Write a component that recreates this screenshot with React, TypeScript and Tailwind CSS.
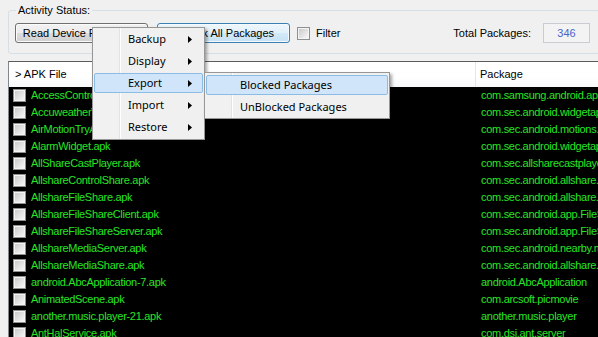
import React from "react";

const rows: [string, string][] = [
  ["AccessControl.apk", "com.samsung.android.app.accesscontrol"],
  ["AccuweatherWidget.apk", "com.sec.android.widgetapp.ap.hero.accuweather"],
  ["AirMotionTryActually.apk", "com.sec.android.motions.settings.panningtutorial"],
  ["AlarmWidget.apk", "com.sec.android.widgetapp.alarmwidget"],
  ["AllShareCastPlayer.apk", "com.sec.allsharecastplayer"],
  ["AllshareControlShare.apk", "com.sec.android.allshare.controlshare"],
  ["AllshareFileShare.apk", "com.sec.android.allshare.framework"],
  ["AllshareFileShareClient.apk", "com.sec.android.app.FileShareClient"],
  ["AllshareFileShareServer.apk", "com.sec.android.app.FileShareServer"],
  ["AllshareMediaServer.apk", "com.sec.android.nearby.mediaserver"],
  ["AllshareMediaShare.apk", "com.sec.android.allshare.service.mediashare"],
  ["android.AbcApplication-7.apk", "android.AbcApplication"],
  ["AnimatedScene.apk", "com.arcsoft.picmovie"],
  ["another.music.player-21.apk", "another.music.player"],
  ["AntHalService.apk", "com.dsi.ant.server"],
];

function CheckBox() {
  return (
    <div className="w-[13px] h-[13px] shrink-0 border border-[#8e8f8f] bg-[#f4f4f4] p-[1px]">
      <div className="w-full h-full bg-linear-to-br from-[#cbcbcb] to-[#f6f6f6]" />
    </div>
  );
}

function Arrow() {
  return (
    <svg width="4" height="7" viewBox="0 0 4 7">
      <polygon points="0,0 4,3.5 0,7" fill="#000" />
    </svg>
  );
}

function MenuItem({ label, active, arrow }: { label: string; active?: boolean; arrow?: boolean }) {
  return (
    <div className="h-[22px] px-[1px] py-[1px] relative">
      <div
        className={
          "h-full flex items-center justify-between pl-[33px] pr-[10px] rounded-[2px] border " +
          (active ? "border-[#8cbbe6] bg-[#d0e5fa]" : "border-transparent")
        }
      >
        <span>{label}</span>
        {arrow ? <Arrow /> : null}
      </div>
    </div>
  );
}

export default function App() {
  return (
    <div className="w-[598px] h-[337px] overflow-hidden bg-[#f0f0f0] relative font-['Liberation_Sans',Arial,sans-serif] text-[11px] text-black leading-[13px]">
      <div className="w-[640px] pl-[8px] pt-[10px]">
        {/* Group box */}
        <div className="relative w-[592px] h-[44px] border border-[#d5dfe5] rounded-[3px] flex items-start pt-[12px] pl-[6px] pr-[9px]">
          <span className="absolute left-[7px] top-[-7px] px-[2px] bg-[#f0f0f0]">Activity Status:</span>
          <div className="w-[133px] h-[20px] rounded-[3px] border border-[#707070] shadow-[inset_0_0_0_1px_#fbfbfb] bg-[linear-gradient(to_bottom,#f2f2f2_0%,#ebebeb_50%,#dddddd_50%,#cfcfcf_100%)] flex items-center justify-center pr-[3px]">
            Read Device Packages
          </div>
          <div className="ml-[9px] w-[133px] h-[20px] rounded-[3px] border border-[#3c7fb1] shadow-[inset_0_0_0_1px_#f4fafe] bg-[linear-gradient(to_bottom,#eef6fc_0%,#e2f0fa_50%,#d3e9f8_50%,#c6e1f4_100%)] flex items-center justify-center pl-[4px]">
            Check All Packages
          </div>
          <div className="ml-[7px] h-[20px] flex items-center">
            <CheckBox />
            <span className="ml-[6px]">Filter</span>
          </div>
          <div className="ml-auto h-[20px] flex items-center">
            <span>Total Packages:</span>
            <div className="ml-[12px] w-[47px] h-[20px] border border-[#c9ccd1] bg-[#f3f3f3] flex items-center justify-center text-[#4a63c9]">
              346
            </div>
          </div>
        </div>

        {/* List view */}
        <div className="mt-[7px] border-l border-t border-l-[#828790] border-t-[#5c5c5c] w-[592px]">
          <div className="h-[25px] bg-[linear-gradient(to_bottom,#ffffff_0%,#ffffff_60%,#f7f8fa_100%)] flex">
            <div className="w-[467px] shrink-0 border-r border-[#e3e5e8] flex items-center pl-[6px]">&gt; APK File</div>
            <div className="flex-1 flex items-center pl-[4px]">Package</div>
          </div>
          <div className="bg-black h-[260px]">
            {rows.map(([apk, pkg]) => (
              <div key={apk} className="h-[17px] flex text-[#26e626] whitespace-nowrap tracking-[-0.3px]">
                <div className="w-[467px] shrink-0 flex items-center pl-[4px] overflow-hidden">
                  <CheckBox />
                  <span className="ml-[5px]">{apk}</span>
                </div>
                <div className="flex-1 flex items-center pl-[5px] overflow-hidden">{pkg}</div>
              </div>
            ))}
          </div>
        </div>
      </div>

      {/* Context menu */}
      <div className="absolute left-[92px] top-[27px] w-[113px] border border-[#979797] bg-[#f0f0f0] pb-[1px] shadow-[2px_2px_3px_rgba(0,0,0,0.35)] font-['Noto_Sans',sans-serif] text-[11px] leading-[14px]">
        <div className="absolute left-0 top-0 bottom-0 w-[27px] bg-[#f1f1f1] border-r border-[#e2e3e3] shadow-[1px_0_0_#ffffff]" />
        <MenuItem label="Backup" arrow />
        <MenuItem label="Display" arrow />
        <MenuItem label="Export" arrow active />
        <MenuItem label="Import" arrow />
        <MenuItem label="Restore" arrow />
      </div>

      {/* Submenu */}
      <div className="absolute left-[204px] top-[72px] w-[186px] border border-[#979797] bg-[#f0f0f0] pt-[1px] shadow-[2px_2px_3px_rgba(0,0,0,0.35)] font-['Noto_Sans',sans-serif] text-[11px] leading-[14px]">
        <div className="absolute left-0 top-0 bottom-0 w-[27px] bg-[#f1f1f1] border-r border-[#e2e3e3] shadow-[1px_0_0_#ffffff]" />
        <MenuItem label="Blocked Packages" active />
        <MenuItem label="UnBlocked Packages" />
      </div>
    </div>
  );
}
